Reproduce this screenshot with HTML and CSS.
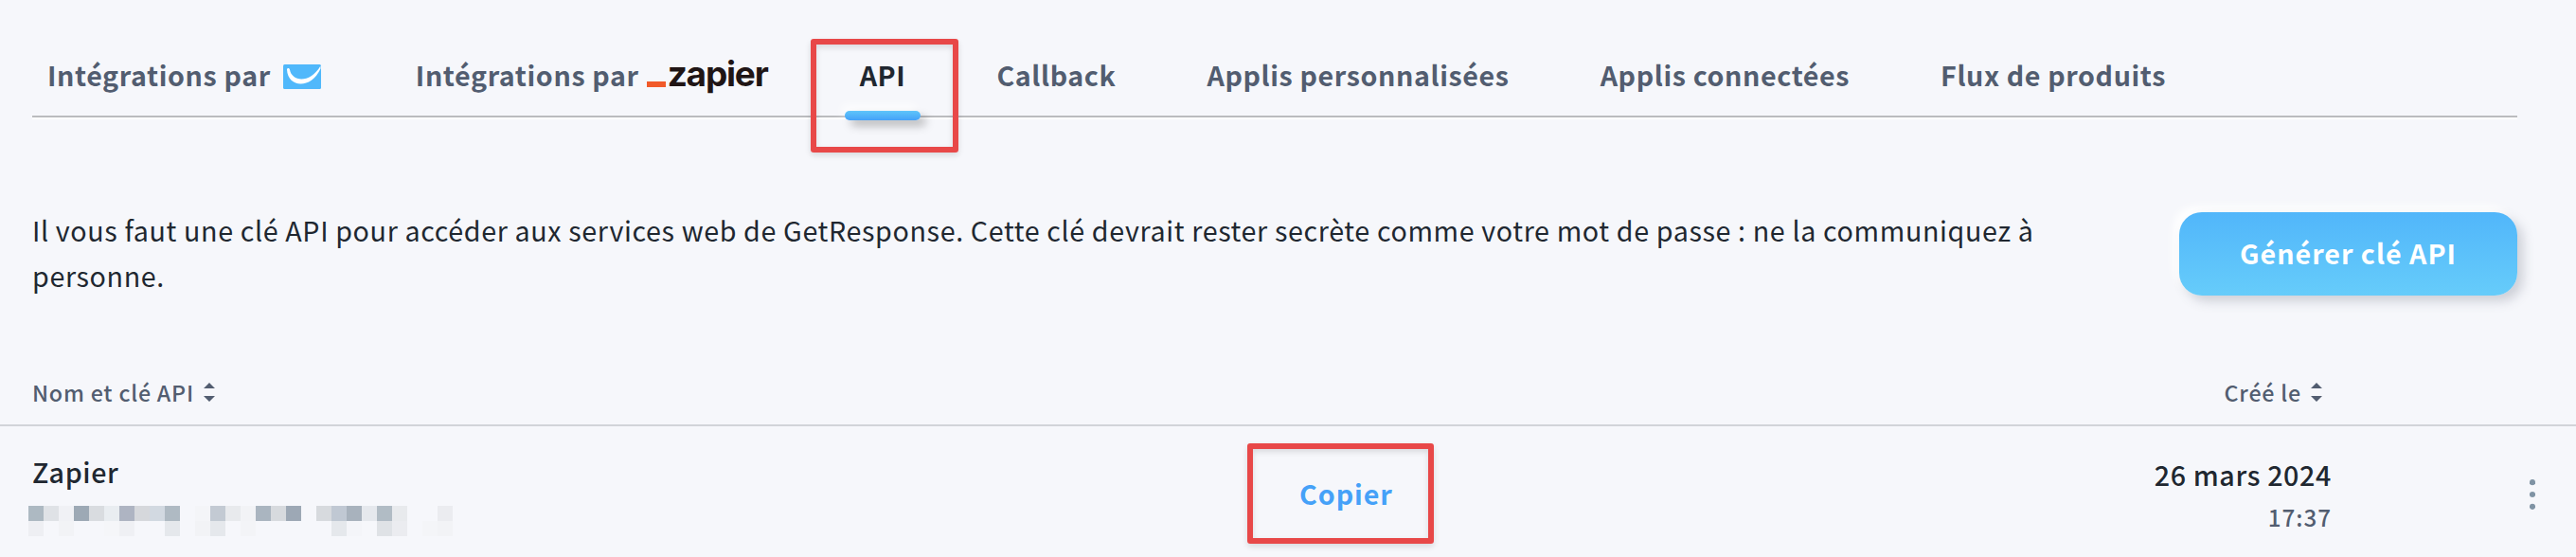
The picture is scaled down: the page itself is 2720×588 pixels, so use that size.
FILE: index.html
```html
<!DOCTYPE html>
<html lang="fr">
<head>
<meta charset="utf-8">
<title>API</title>
<link rel="stylesheet" href="styles.css">
</head>
<body>
<nav class="tabs">
  <a class="tab">Intégrations par
    <svg class="getresponse" width="40" height="26" viewBox="0 0 40 26"><rect width="40" height="26" rx="1.500" fill="#50b8fb"/><path d="M4 5.500C4 3.500 6.500 3.500 7 5.500C9 18 28 21 39.500 1.500V4.500C29 27 5 24.500 4 5.500Z" fill="#fff"/></svg>
  </a>
  <a class="tab">Intégrations par<span class="zapier"><span class="underscore"></span><b class="wordmark">zapier</b></span></a>
  <a class="tab active">API<span class="indicator"></span><span class="mark mark-tab"></span></a>
  <a class="tab">Callback</a>
  <a class="tab">Applis personnalisées</a>
  <a class="tab">Applis connectées</a>
  <a class="tab">Flux de produits</a>
</nav>
<section class="intro">
  <p class="text">Il vous faut une clé API pour accéder aux services web de GetResponse. Cette clé devrait rester secrète comme votre mot de passe : ne la communiquez à personne.</p>
  <button class="generate">Générer clé API</button>
</section>
<section class="table">
  <div class="head">
    <span class="sortable">Nom et clé API <svg class="sort" width="12" height="20" viewBox="0 0 12 20"><path d="M0 6L6 0L12 6ZM0 14H12L6 20Z" fill="#525d70"/></svg></span>
    <span class="sortable">Créé le <svg class="sort" width="12" height="20" viewBox="0 0 12 20"><path d="M0 6L6 0L12 6ZM0 14H12L6 20Z" fill="#525d70"/></svg></span>
  </div>
  <div class="row">
    <div class="key">
      <span class="name">Zapier</span>
      <svg class="masked" width="448" height="32" viewBox="0 0 448 32" shape-rendering="crispEdges">
        <path fill="#adb9c2" d="M0 0h16v16H0z"/><path fill="#dfe2e6" d="M16 0h16v16H16z"/><path fill="#f0f1f5" d="M32 0h16v16H32z"/><path fill="#9da9b5" d="M48 0h16v16H48z"/><path fill="#d9dce0" d="M64 0h16v16H64z"/><path fill="#e9edf1" d="M80 0h16v16H80z"/><path fill="#aeb4c2" d="M96 0h16v16H96z"/><path fill="#d6d8dc" d="M112 0h16v16h-16z"/><path fill="#d2d9e1" d="M128 0h16v16h-16z"/><path fill="#afbac3" d="M144 0h16v16h-16z"/>
        <path fill="#f4f5f8" d="M176 0h16v16h-16z"/><path fill="#c3cad3" d="M192 0h16v16h-16z"/><path fill="#e8eaed" d="M208 0h16v16h-16z"/><path fill="#f2f3f6" d="M224 0h16v16h-16z"/><path fill="#aab5c0" d="M240 0h16v16h-16z"/><path fill="#d7dade" d="M256 0h16v16h-16z"/><path fill="#9da8b5" d="M272 0h16v16h-16z"/><path fill="#d7dade" d="M304 0h16v16h-16z"/><path fill="#c0c8d3" d="M320 0h16v16h-16z"/><path fill="#a8b2bd" d="M336 0h16v16h-16z"/><path fill="#e5e8ed" d="M352 0h16v16h-16z"/><path fill="#b1bcc5" d="M368 0h16v16h-16z"/><path fill="#e8eaed" d="M384 0h16v16h-16z"/><path fill="#ebecf0" d="M432 0h16v16h-16z"/>
        <path fill="#eeeff3" d="M0 16h16v16H0z"/><path fill="#f2f3f6" d="M32 16h16v16H32z"/><path fill="#f5f6f9" d="M80 16h16v16H80z"/><path fill="#eff0f4" d="M96 16h16v16H96z"/><path fill="#e5e8ec" d="M144 16h16v16h-16z"/><path fill="#f2f3f6" d="M176 16h16v16h-16z"/><path fill="#e5e8ec" d="M192 16h16v16h-16z"/><path fill="#f3f4f7" d="M224 16h16v16h-16z"/><path fill="#e5e8ec" d="M320 16h16v16h-16z"/><path fill="#f4f5f9" d="M336 16h16v16h-16z"/><path fill="#dfe2e6" d="M368 16h16v16h-16z"/><path fill="#ebecf0" d="M384 16h16v16h-16z"/><path fill="#f4f5f8" d="M416 16h16v16h-16z"/><path fill="#f2f3f6" d="M432 16h16v16h-16z"/>
      </svg>
    </div>
    <div class="copy">Copier<span class="mark mark-copy"></span></div>
    <div class="created"><span class="date">26 mars 2024</span><span class="time">17:37</span></div>
    <svg class="more" width="6" height="32" viewBox="0 0 6 32"><g fill="#7f93a4"><circle cx="3" cy="3.200" r="3.100"/><circle cx="3" cy="16" r="3.100"/><circle cx="3" cy="28.800" r="3.100"/></g></svg>
  </div>
</section>
</body>
</html>
```
FILE: styles.css
```css
* {
  box-sizing: border-box;
}

body {
  margin: 0;
  height: 588px;
  overflow: hidden;
  background: #f6f7fb;
  color: #202730;
  font-family: "Noto Sans CJK SC", "Noto Sans", sans-serif;
  font-size: 28.65px;
  line-height: 48px;
  letter-spacing: 0.64px;
}

.tabs {
  display: flex;
  gap: 64px;
  height: 124px;
  margin: 0 62px 0 34px;
  border-bottom: 2px solid #bbbcbf;
  box-shadow: 0 2px 0 #fff;
}

.tab {
  position: relative;
  display: flex;
  align-items: flex-start;
  padding: 55px 16px 0;
  color: #525d70;
  font-weight: 700;
  letter-spacing: 0.62px;
  white-space: nowrap;
}

.tab.active {
  color: #202730;
}

.getresponse {
  margin: 13px 4px 0 13px;
}

.zapier {
  display: flex;
  width: 137px;
  padding-left: 8px;
}

.underscore {
  flex: none;
  width: 20px;
  height: 6px;
  margin-top: 31px;
  background: #f15a29;
}

.wordmark {
  margin-left: 2px;
  color: #201515;
  font-family: Inter, "Liberation Sans", sans-serif;
  font-size: 37px;
  font-weight: 700;
  letter-spacing: -1.2px;
  line-height: 45px;
}

.indicator {
  position: absolute;
  left: 0;
  right: 0;
  bottom: -5px;
  height: 10px;
  border-radius: 5px;
  background: linear-gradient(#5fc5fa, #45a1f8);
  box-shadow: 6px 6px 10px rgba(0, 0, 0, 0.25), -4px -6px 10px rgba(255, 255, 255, 0.8);
}

.mark {
  position: absolute;
  border: 6px solid #e84848;
  border-radius: 3px;
  box-shadow: 0 3px 6px rgba(0, 0, 0, 0.12), inset 0 3px 6px rgba(0, 0, 0, 0.12);
}

.mark-tab {
  left: -36px;
  top: 41px;
  width: 156px;
  height: 120px;
}

.intro {
  display: flex;
  justify-content: space-between;
  align-items: flex-start;
  margin: 95px 62px 0 34px;
}

.text {
  width: 2140px;
  margin: 0;
}

.generate {
  width: 357px;
  height: 88px;
  margin-top: 5px;
  padding: 0 0 2px;
  border: 0;
  border-radius: 24px;
  background: linear-gradient(#51b6fa, #66ccfa);
  box-shadow: 6px 6px 12px rgba(82, 93, 112, 0.25), -6px -6px 10px #fff;
  color: #fff;
  font: inherit;
  font-weight: 700;
  letter-spacing: 0.98px;
}

.head {
  display: flex;
  justify-content: space-between;
  height: 72px;
  margin-top: 63px;
  padding: 0 268px 12px 34px;
  border-bottom: 2px solid #d2d4d9;
  color: #525d70;
  font-size: 23.28px;
  font-weight: 500;
  letter-spacing: 0.78px;
  line-height: 36px;
}

.sortable {
  display: flex;
  align-items: center;
  gap: 10px;
  height: 72px;
}

.row {
  display: grid;
  grid-template-columns: 1338px 140px 984px 209px 6px;
  height: 138px;
}

.key {
  padding-top: 24px;
}

.name {
  display: block;
  height: 48px;
  padding-left: 34px;
  font-weight: 500;
}

.masked {
  display: block;
  margin: 12px 0 0 30px;
}

.copy {
  position: relative;
  padding: 47px 0 0 34px;
  color: #45a1f8;
  font-weight: 700;
  letter-spacing: 0.96px;
}

.mark-copy {
  left: -21px;
  top: 18px;
  width: 197px;
  height: 106px;
}

.created {
  display: flex;
  flex-direction: column;
  align-items: flex-end;
  padding-top: 27px;
  font-weight: 500;
}

.time {
  color: #525d70;
  font-size: 24.2px;
  letter-spacing: 1px;
  line-height: 42px;
  font-kerning: none;
}

.more {
  grid-column: 5;
  margin-top: 56px;
}
```
